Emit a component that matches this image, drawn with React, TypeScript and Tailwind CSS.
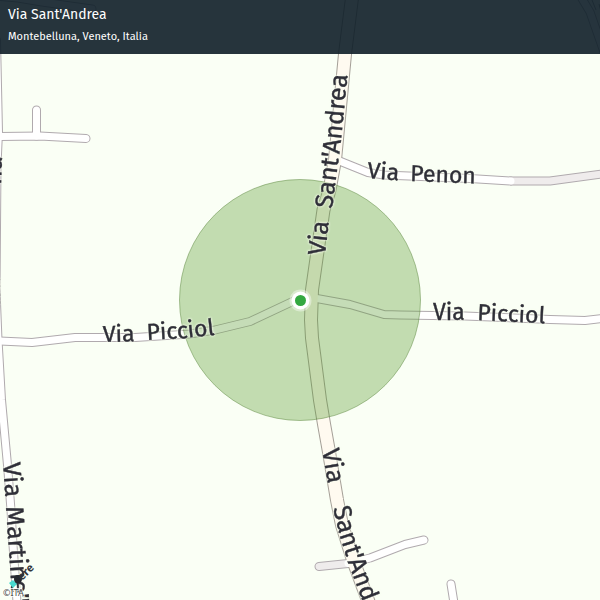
const majorRoad =
  "M352 -2 L345 54 L335 160 L329.5 190 L323.5 210 L317 255 L312 290 L311 320 L312 338 L320 400 L324 424 L329 452 L337 500 L342 525 L353 560 L369 603";

const minorRoads = [
  "M-3.5 40 L-1.5 132 L-3 165 L-4 290 L-2 340 L1.5 400 L7.5 465 L11 510 L13 545 L17 602",
  "M-2 136.5 L40 136 L86 138.5",
  "M36.5 136 L36.5 110",
  "M-2 341 L32 342.5 L75 337.5 L135 337.5 L190 334 L215 330 L250 321.5 L300 298",
  "M314 298 L350 304.5 L384 314.5 L400 315 L465 316 L550 319.5 L585 320.5 L602 318.5",
  "M337 160 L368 172.5 L384 175 L470 178.5 L511 181",
  "M348 563.5 L370 558 L405 544.5 L424 540",
  "M451 584 L454 603",
  "M-4 -4 L18 -2 L42 2 L92 9",
  "M581 -3 L590 12 L604 52",
];

const trackRoads = ["M319 566.5 L348 563.5", "M511 181 L550 181 L602 174"];

const crossLabels = [
  { id: "penon-1", d: "M367 178 L407 181", text: "Via" },
  { id: "penon-2", d: "M410 181 L490 184", text: "Penon" },
  { id: "picciol-w-1", d: "M103 342 L143 341", text: "Via" },
  { id: "picciol-w-2", d: "M147 340 L185 338 L230 333", text: "Picciol" },
  { id: "picciol-e-1", d: "M433 320 L473 320", text: "Via" },
  { id: "picciol-e-2", d: "M477 320 L560 324", text: "Picciol" },
];

const uprightLabels = [
  { id: "andrea-n-1", d: "M325 256 L330 210", text: "Via" },
  { id: "andrea-n-2", d: "M332 209 L341 140 L350 50", text: "Sant'Andrea" },
  { id: "andrea-s-1", d: "M322 450 L330 495", text: "Via" },
  { id: "andrea-s-2", d: "M333 508 L341 540 L350 568 L370 620", text: "Sant'And" },
  { id: "martine-1", d: "M3 463 L6 503", text: "Via" },
  { id: "martine-2", d: "M6 507 L11 580 L13 630", text: "Martine\"" },
  { id: "edge-1", d: "M1 185 L2 150", text: "na" },
  { id: "edge-2", d: "M0 306 L0 270", text: "na" },
];

function StreetLabels({ items }: { items: typeof crossLabels }) {
  return (
    <>
      {items.map(({ id, d, text }) => (
        <g key={id}>
          <path id={id} d={d} fill="none" stroke="none" />
          <text>
            <textPath href={`#${id}`}>{text}</textPath>
          </text>
        </g>
      ))}
    </>
  );
}

function RoadMap() {
  return (
    <svg
      viewBox="0 0 600 600"
      preserveAspectRatio="xMidYMid slice"
      className="block h-full w-full"
      role="img"
      aria-label="Via Sant'Andrea"
    >
      <g fill="none" stroke="#b0aaae" strokeWidth="9" strokeLinecap="round" strokeLinejoin="round">
        {[...minorRoads, ...trackRoads].map((d) => (
          <path key={d} d={d} />
        ))}
        <path d={majorRoad} strokeWidth="14" stroke="#a5a098" />
      </g>
      <g fill="none" strokeWidth="7" strokeLinecap="round" strokeLinejoin="round">
        {trackRoads.map((d) => (
          <path key={d} d={d} stroke="#efecec" />
        ))}
        {minorRoads.map((d) => (
          <path key={d} d={d} stroke="#ffffff" />
        ))}
        <path d={majorRoad} stroke="#fffaf0" strokeWidth="12" />
      </g>
      <path d="M592 0 L596 10 M599 4 L603 20" stroke="#999" fill="none" />

      <circle cx="300" cy="300" r="120.5" fill="#5a9b30" fillOpacity="0.35" stroke="#5d873f" strokeOpacity="0.5" />

      <g
        className="font-['Fira_Sans','Noto_Sans',sans-serif] [filter:drop-shadow(0_0_1px_#fafff0cc)_drop-shadow(0_0_1px_#fafff0bb)]"
        fill="#2f2f38"
        stroke="#2f2f38"
        strokeWidth="0.4"
      >
        <g className="text-[23px]">
          <StreetLabels items={crossLabels} />
        </g>
        <g className="text-[25px]">
          <StreetLabels items={uprightLabels} />
        </g>
      </g>

      <circle cx="300.5" cy="300.5" r="11" fill="#ffffff" fillOpacity="0.4" />
      <circle cx="300.5" cy="300.5" r="9" fill="#ffffff" />
      <circle cx="300.5" cy="300.5" r="5.5" fill="#33a840" />

      <path d="M9 583 L13 580 L17 584 L13 588 Z" fill="#48dad0" />
      <circle cx="18" cy="579" r="4" fill="#25282e" />
      <text
        transform="translate(22 581) rotate(-45)"
        className="font-['Noto_Sans',sans-serif] text-[11px] font-bold"
        fill="#30343a"
      >
        ere
      </text>
      <text
        x="3"
        y="596"
        className="font-['Noto_Sans',sans-serif] text-[9px]"
        fill="#4a4a4a"
        stroke="#ffffff"
        strokeOpacity="0.8"
        strokeWidth="2"
        paintOrder="stroke"
      >
        ©ITA
      </text>
    </svg>
  );
}

export default function App() {
  return (
    <main className="relative h-screen w-full overflow-hidden bg-[#fafff5]">
      <RoadMap />
      <header className="absolute inset-x-0 top-0 flex h-[54px] flex-col gap-1 bg-[#0e1e28]/90 px-2 pt-1 font-['Fira_Sans','Noto_Sans',sans-serif] text-white">
        <h1 className="text-[14px] leading-[22px]">Via Sant'Andrea</h1>
        <p className="text-[11px] leading-[14px]">Montebelluna, Veneto, Italia</p>
      </header>
    </main>
  );
}
